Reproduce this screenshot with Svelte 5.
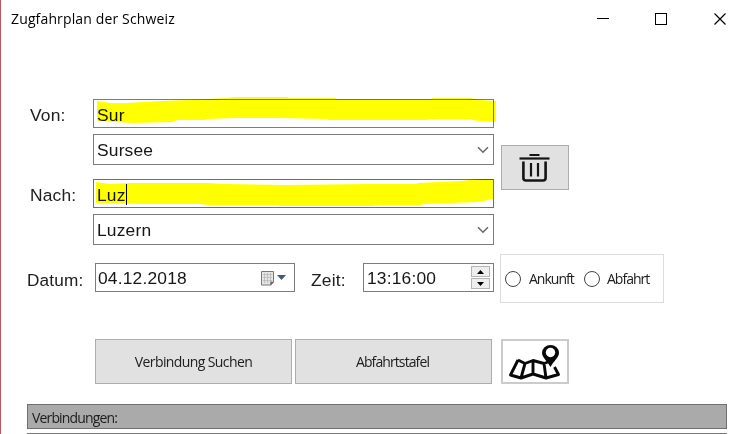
<script>
  let from = 'Sur';
  let to = 'Luz';
  const choices = ['Ankunft', 'Abfahrt'];
</script>

<main class="window">
  <header>
    <h1><span>Zugfahrplan der Schweiz</span></h1>
    <svg class="controls" width="129" height="12" viewBox="0 0 129 12" fill="none" stroke="#000" shape-rendering="crispEdges">
      <path d="M0 5.5H12M58.5.5H69.5V11.5H58.5Z" />
      <path d="M117.5 .5L128.5 11.5M128.5 .5L117.5 11.5" shape-rendering="auto" stroke-width="1.2" />
    </svg>
  </header>

  <section class="route">
    <div class="stops">
      <div class="row">
        <span class="label">Von:</span>
        <div class="field entry"><span>{from}</span></div>
      </div>
      <div class="row second">
        <div class="field combo">
          <span>Sursee</span>
          <svg width="12" height="8" viewBox="0 0 12 8"><path d="M1 1.2L6 6.2L11 1.2" fill="none" stroke="#666" stroke-width="1.5" /></svg>
        </div>
      </div>
      <div class="row third">
        <span class="label">Nach:</span>
        <div class="field entry focused"><span>{to}</span><i class="caret"></i></div>
      </div>
      <div class="row second">
        <div class="field combo">
          <span>Luzern</span>
          <svg width="12" height="8" viewBox="0 0 12 8"><path d="M1 1.2L6 6.2L11 1.2" fill="none" stroke="#666" stroke-width="1.5" /></svg>
        </div>
      </div>
    </div>
    <div class="button trash">
      <svg width="32" height="30" viewBox="0 0 32 30" fill="none" stroke="#151515">
        <path d="M10.5 2H20.5" stroke-width="2" />
        <path d="M.5 5.5H30.5" stroke-width="2.2" />
        <path d="M4.4 8.5V25Q4.4 27.5 7 27.5H24Q26.6 27.5 26.6 25V8.5" stroke-width="2.6" />
        <path d="M12 10V23.5M19 10V23.5" stroke-width="2.2" />
      </svg>
    </div>
    <svg class="marker" width="420" height="120" viewBox="90 93 420 120" fill="#ff0">
      <path d="M97 101L110 103L127 103L160 101L200 99.5L225 98L235 97H288V98H336V99H432V98H470L480 100L496 101V122L480 121L465 119H440L425 120H328V119L280 118H235L207 119L205 120H178L172 122L133 123L97 121Z" />
      <path d="M96 182L110 184L128 183H208L225 184L285 185L370 184H416L418 183L440 182L460 181L480 179H493V199L478 202L425 204L420 205H378L374 206H280L275 205H210L200 204H140L96 203Z" />
    </svg>
  </section>

  <section class="when">
    <span class="cap datum">Datum:</span>
    <div class="field date">
      <span>04.12.2018</span>
      <svg width="27" height="16" viewBox="0 0 27 16">
        <path d="M1.5 1.5H13.5V12L11 15H1.5Z" fill="#e5e5e5" stroke="#77777a" />
        <path d="M3 4.5H12M3 7.5H12M3 10.5H12M4.5 3V13M7.5 3V13M10.5 3V13" stroke="#b5b5b8" stroke-width=".7" />
        <path d="M10 15L10.5 11.5L14 12Z" fill="#66666b" />
        <path d="M17 5H26L21.5 10Z" fill="#42567f" />
      </svg>
    </div>
    <span class="cap second-cap">Zeit:</span>
    <div class="field time">
      <span>13:16:00</span>
      <div class="spin">
        <i><svg width="7" height="4" viewBox="0 0 7 4"><path d="M0 4L3.5 0L7 4Z" /></svg></i>
        <i><svg width="7" height="4" viewBox="0 0 7 4"><path d="M0 0L3.5 4L7 0Z" /></svg></i>
      </div>
    </div>
    <div class="choices">
      {#each choices as choice}
        <div class="choice"><i class="radio"></i><span>{choice}</span></div>
      {/each}
    </div>
  </section>

  <section class="actions">
    <div class="button wide"><span class="search">Verbindung Suchen</span></div>
    <div class="button wide"><span class="board">Abfahrtstafel</span></div>
    <div class="button map">
      <svg width="54" height="38" viewBox="0 0 54 38" fill="none" stroke="#080808" stroke-linejoin="round">
        <path d="M10 17L2.5 32L13 35L25 31L38 35L50.5 31.5L46.5 24M10 17L17 20.5L25 17.5L36 20.5L40 19M17 20.5L13 35M25 17.5V31M36 20.5L38 35" stroke-width="2.9" />
        <path d="M42.5 24C39.5 18.5 34 14.5 34 9.8A8.5 7.8 0 0 1 51 9.8C51 14.5 45.5 18.5 42.5 24Z" fill="#080808" stroke="none" />
        <circle cx="42.5" cy="9.5" r="4.7" fill="#fff" stroke="none" />
      </svg>
    </div>
  </section>

  <section class="results">
    <div class="heading"><span>Verbindungen:</span></div>
    <div class="list"></div>
  </section>
</main>

<style>
  :global(body) { margin: 0; overflow: hidden; background: #fff; }
  .window { box-sizing: border-box; width: 749px; height: 434px; overflow: hidden; border-left: 1px solid #b9585f; background: #fff; color: #202020; font: 17.4px/20px "Liberation Sans", Arial, sans-serif; letter-spacing: .18px; }
  .window * { box-sizing: border-box; }
  span { white-space: nowrap; }
  svg { display: block; flex: none; }
  header { display: flex; justify-content: space-between; align-items: center; height: 38px; padding: 0 23px 0 10px; }
  h1 { margin: 0; color: #000; font: 14px/20px "Open Sans", "Noto Sans", sans-serif; letter-spacing: .14px; }
  .route { position: relative; display: flex; align-items: center; gap: 7px; margin-top: 61px; padding-left: 28px; height: 146px; }
  .stops { width: 465px; height: 146px; }
  .row { display: flex; justify-content: flex-end; align-items: center; }
  .second { margin-top: 6px; }
  .third { margin-top: 14px; }
  .label { flex: 1; padding: 3px 0 0 1px; }
  .field { display: flex; align-items: center; border: 1px solid #7c7c7c; background: #fff; color: #161616; }
  .entry { width: 401px; height: 29px; padding: 2px 0 0 3px; }
  .focused { border-color: #2d7fc7; }
  .combo { width: 401px; height: 31px; padding: 0 4px 0 3px; justify-content: space-between; }
  .caret { width: 1px; height: 21px; background: #000; }
  .button { display: flex; justify-content: center; align-items: center; height: 45px; border: 1px solid #adadad; background: #e1e1e1; font: 14px/18px "Open Sans", "Noto Sans", sans-serif; }
  .trash { width: 68px; margin-bottom: 9px; }
  .marker { position: absolute; left: 89px; top: -6px; mix-blend-mode: multiply; pointer-events: none; }
  .when { display: flex; align-items: center; height: 49px; margin-top: 9px; padding-left: 26px; }
  .cap { width: 68px; padding-top: 2px; }
  .datum { font-size: 17.2px; }
  .second-cap { width: 52px; margin-left: 16px; }
  .date { width: 200px; height: 29px; margin-bottom: 2px; padding: 0 7px 0 2px; justify-content: space-between; }
  .time { width: 131px; height: 29px; margin-bottom: 2px; padding: 0 3px; justify-content: space-between; }
  .spin { display: flex; flex-direction: column; gap: 1px; }
  .spin i { display: flex; justify-content: center; align-items: center; width: 19px; height: 11px; border: 1px solid #b5b5b5; background: #eee; }
  .choices { display: flex; gap: 10px; width: 164px; height: 49px; margin-left: 6px; padding-left: 4px; align-items: center; border: 1px solid #dcdcdc; font: 14px/18px "Open Sans", "Noto Sans", sans-serif; letter-spacing: -1px; }
  .choice { display: flex; align-items: center; gap: 8px; }
  .choice:first-child { width: 69px; }
  .choice:last-child { gap: 7px; }
  .radio { width: 16px; height: 16px; border: 1px solid #444; border-radius: 50%; background: #fff; }
  .actions { display: flex; margin-top: 36px; padding-left: 94px; }
  .wide { width: 197px; margin-right: 3px; }
  .wide span { padding-top: 1px; }
  .map { width: 68px; margin-left: 6px; border: 2px solid #cbcbcb; background: #fff; }
  .results { width: 700px; margin: 20px 0 0 26px; }
  .heading { height: 25px; border: 1px solid #707070; background: #aaa; padding: 3px 0 0 4px; font: 14px/20px "Open Sans", "Noto Sans", sans-serif; letter-spacing: -.85px; }
  .list { height: 10px; margin-top: 4px; border: 1px solid #777; background: #aaa; }
  .search { letter-spacing: -.6px; }
  .board { padding-right: 2px; letter-spacing: -.9px; }
</style>
